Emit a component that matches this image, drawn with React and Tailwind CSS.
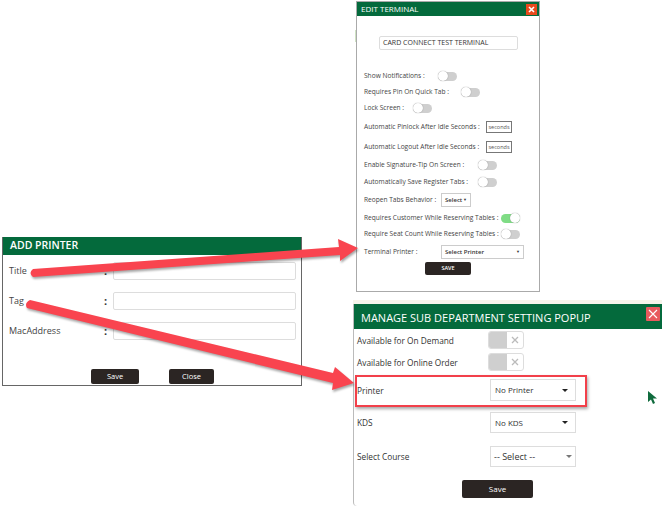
const FONT = "font-['Open_Sans','Noto_Sans',sans-serif]";

const Toggle = ({ on }) => (
  <span
    className={`relative block w-[19px] h-[9px] rounded-full ${on ? "bg-[#7fdc85]" : "bg-[#cfcfcf]"}`}
  >
    <span
      className={`absolute top-[-0.5px] w-[10px] h-[10px] rounded-full bg-white shadow-[0_0_1px_#777] ${on ? "right-0" : "left-0"}`}
    />
  </span>
);

const SecondsBox = () => (
  <span className="flex items-center justify-center w-[26px] h-[12px] border border-[#777] bg-white text-[5.5px] text-[#555]">
    seconds
  </span>
);

const TerminalSelect = ({ label, width }) => (
  <span
    className={`flex items-center justify-between h-[14px] px-[2px] border border-[#ccc] bg-white text-[6px] font-semibold text-[#333] ${width}`}
  >
    <span className="pl-[1px]">{label}</span>
    <span className="text-[4px] pr-[1px]">▼</span>
  </span>
);

const terminalRows = [
  { label: "Show Notifications :", w: "w-[74px]", h: "mt-[21px]", control: <Toggle /> },
  { label: "Requires Pin On Quick Tab :", w: "w-[97px]", h: "mt-[6px]", control: <Toggle /> },
  { label: "Lock Screen :", w: "w-[49px]", h: "mt-[6px]", control: <Toggle /> },
  { label: "Automatic Pinlock After Idle Seconds :", w: "w-[122px]", h: "mt-[8px]", control: <SecondsBox /> },
  { label: "Automatic Logout After Idle Seconds :", w: "w-[122px]", h: "mt-[8px]", control: <SecondsBox /> },
  { label: "Enable Signature-Tip On Screen :", w: "w-[114px]", h: "mt-[7px]", control: <Toggle /> },
  { label: "Automatically Save Register Tabs :", w: "w-[114px]", h: "mt-[7px]", control: <Toggle /> },
  { label: "Reopen Tabs Behavior :", w: "w-[77px]", h: "mt-[6px]", control: <TerminalSelect label="Select" width="w-[30px]" /> },
  { label: "Requires Customer While Reserving Tables :", w: "w-[137px]", h: "mt-[6px]", control: <Toggle on /> },
  { label: "Require Seat Count While Reserving Tables :", w: "w-[137px]", h: "mt-[6px]", control: <Toggle /> },
  { label: "Terminal Printer :", w: "w-[77px]", h: "mt-[6px]", control: <TerminalSelect label="Select Printer" width="w-[83px]" /> },
];

const EditTerminal = () => (
  <div className="absolute left-[356px] top-[1px] w-[184px] h-[291px] border border-[#aaa] bg-white">
    <div className="flex items-center justify-between h-[14px] pl-[4px] pr-[2px] bg-[#046a3c] text-[8px] text-white">
      <span>EDIT TERMINAL</span>
      <span className="flex items-center justify-center w-[11px] h-[11px] bg-[#e8491d] text-white">
        <svg width="7" height="7" viewBox="0 0 7 7">
          <path d="M1 1l5 5M6 1l-5 5" stroke="#fff" strokeWidth="1.6" />
        </svg>
      </span>
    </div>
    <div className="ml-[22px] mt-[20px] flex items-center w-[139px] h-[14px] pl-[3px] border border-[#ddd] rounded-[2px] text-[7px] text-[#333]">
      CARD CONNECT TEST TERMINAL
    </div>
    <div className="pl-[7px]">
      {terminalRows.map((row) => (
        <div key={row.label} className={`flex items-center min-h-[10px] ${row.h}`}>
          <span className={`shrink-0 whitespace-nowrap text-[6.6px] leading-[10px] text-[#444] ${row.w}`}>
            {row.label}
          </span>
          {row.control}
        </div>
      ))}
    </div>
    <button className="block ml-[68px] mt-[3px] w-[46px] h-[13px] rounded-[2px] bg-[#2b2523] text-[5.5px] font-semibold text-white">
      SAVE
    </button>
  </div>
);

const printerFields = ["Title", "Tag", "MacAddress"];

const AddPrinter = () => (
  <div className="absolute left-[2px] top-[237px] w-[300px] h-[149px] border border-[#666] border-t-0 bg-white">
    <div className="flex items-center h-[18px] pl-[7px] bg-[#046a3c] text-[10.5px] font-semibold text-white">
      ADD PRINTER
    </div>
    <div className="mt-[7px] flex flex-col gap-[12px]">
      {printerFields.map((field) => (
        <div key={field} className="flex items-center h-[18px]">
          <span className="w-[101px] pl-[6px] text-[9px] text-[#444]">{field}</span>
          <span className="w-[9px] text-[11px] font-bold text-[#333]">:</span>
          <span className="w-[183px] h-[18px] border border-[#ddd] rounded-[2px] bg-white" />
        </div>
      ))}
    </div>
    <div className="mt-[29px] flex">
      <button className="ml-[88px] w-[48px] h-[15px] rounded-[2px] bg-[#2b2523] text-[7.5px] text-white">
        Save
      </button>
      <button className="ml-[30px] w-[45px] h-[15px] rounded-[2px] bg-[#2b2523] text-[7.5px] text-white">
        Close
      </button>
    </div>
  </div>
);

const XSwitch = () => (
  <span className="flex w-[36px] h-[18px] border border-[#ddd] rounded-[3px] overflow-hidden">
    <span className="w-[18px] bg-[#cfcfcf]" />
    <span className="flex flex-1 items-center justify-center">
      <svg width="8" height="8" viewBox="0 0 8 8">
        <path d="M1 1l6 6M7 1l-6 6" stroke="#bbb" strokeWidth="1.3" />
      </svg>
    </span>
  </span>
);

const DeptSelect = ({ label, big, tall }) => (
  <span className={`flex items-center justify-between w-[86px] border border-[#ddd] bg-white text-[#333] ${tall ? "h-[22px]" : "h-[21px]"} ${big ? "pl-[3px] pr-[3px] text-[9px]" : "pl-[4px] pr-[7px] text-[8px]"}`}>
    <span>{label}</span>
    <svg width="6" height="3" viewBox="0 0 6 3">
      <path d="M0 0h6L3 3z" fill={big ? "#777" : "#222"} />
    </svg>
  </span>
);

const ManageDept = () => (
  <div className="absolute left-[353px] top-[300px] w-[309px] h-[206px] bg-white">
    <div className="h-[4px] bg-[#f6f4ea]" />
    <div className="h-[202px] border-l border-[#bbb] rounded-bl-[4px]">
      <div className="flex items-center justify-between h-[25px] pl-[7px] pr-[2px] bg-[#046a3c] text-[11px] text-white">
        <span className="pt-[3px]">MANAGE SUB DEPARTMENT SETTING POPUP</span>
        <span className="flex items-center justify-center self-start mt-[3px] w-[14px] h-[14px] rounded-[1px] bg-[#e85a5e]">
          <svg width="10" height="10" viewBox="0 0 10 10">
            <path d="M1 1l8 8M9 1l-8 8" stroke="#fff" strokeWidth="1.1" />
          </svg>
        </span>
      </div>
      <div className="pl-[3px] text-[8.3px] text-[#333]">
        <div className="flex items-center h-[18px] mt-[2px]">
          <span className="w-[131px] pt-[2px]">Available for On Demand</span>
          <XSwitch />
        </div>
        <div className="flex items-center h-[18px] mt-[4px]">
          <span className="w-[131px] pt-[2px]">Available for Online Order</span>
          <XSwitch />
        </div>
        <div className="flex items-center h-[22px] mt-[8px]">
          <span className="w-[133px] pt-[2px]">Printer</span>
          <DeptSelect label="No Printer" tall />
        </div>
        <div className="flex items-center h-[21px] mt-[11px]">
          <span className="w-[133px] pt-[1px]">KDS</span>
          <DeptSelect label="No KDS" />
        </div>
        <div className="flex items-center h-[21px] mt-[13px]">
          <span className="w-[133px] pt-[1px]">Select Course</span>
          <DeptSelect label="-- Select --" big />
        </div>
        <button className="block ml-[105px] mt-[13px] w-[71px] h-[18px] rounded-[2px] bg-[#2b2523] text-[8px] text-white">
          Save
        </button>
      </div>
    </div>
  </div>
);

const Arrows = () => (
  <svg
    className="absolute inset-0 drop-shadow-[1px_2px_1px_rgba(0,0,0,0.35)]"
    width="670"
    height="506"
    viewBox="0 0 670 506"
  >
    <path
      d="M33 269L339 247L338 239L358 248L340 261L340 255L33 277Q28 273 33 269Z"
      fill="#f9444f"
    />
    <path
      d="M30 300L333 373L335 367L354 383L332 390L333 383L27 308Q24 303 30 300Z"
      fill="#f9444f"
    />
  </svg>
);

const App = () => {
  return (
    <div className={`relative w-[670px] h-[506px] overflow-hidden bg-white ${FONT}`}>
      <span className="absolute left-[355px] top-[30px] w-[1px] h-[12px] bg-[#cfe3c4]" />
      <EditTerminal />
      <AddPrinter />
      <ManageDept />
      <Arrows />
      <span className="absolute left-[355px] top-[375px] w-[232px] h-[32px] border-2 border-[#f2404a] shadow-[1px_2px_3px_rgba(0,0,0,0.35)]" />
      <svg className="absolute left-[647px] top-[390px]" width="11" height="15" viewBox="0 0 11 15">
        <path d="M1 1L1 12L4 9.5L6 14L8 13L6 8.5L10 8.5Z" fill="#0f6b3d" />
      </svg>
    </div>
  );
};

export default App;
